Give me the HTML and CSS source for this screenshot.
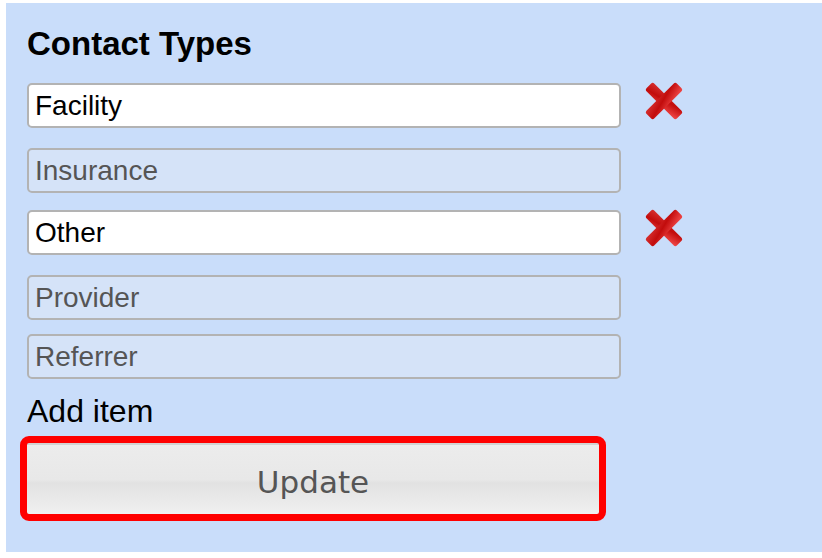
FILE: index.html
```html
<!DOCTYPE html>
<html lang="en">

<head>
    <meta charset="UTF-8" />
    <meta name="viewport" content="width=device-width, initial-scale=1.0" />
    <title>Contact Types</title>
    <link rel="stylesheet" href="styles.css">
</head>

<body>
    <div class="panel">
        <h2>Contact Types</h2>

        <!-- Lista de tipos -->
        <div class="row editable">
            <input class="item" value="Facility" />
            <button class="delete-btn" title="Delete">
                <svg width="38" height="38" viewBox="0 0 38 38">
                    <defs>
                        <linearGradient id="xg" x1="0" y1="0" x2="1" y2="1">
                            <stop offset="0" stop-color="#d63030" />
                            <stop offset="0.45" stop-color="#c20c0c" />
                            <stop offset="1" stop-color="#f24a4a" />
                        </linearGradient>
                        <g id="cross">
                            <rect x="-21.5" y="-5.5" width="43" height="11" rx="2.5" transform="translate(19 19) rotate(45)" />
                            <rect x="-21.5" y="-5.5" width="43" height="11" rx="2.5" transform="translate(19 19) rotate(-45)" />
                        </g>
                    </defs>
                    <use href="#cross" fill="url(#xg)" />
                </svg>
            </button>
        </div>
        <div class="row">
            <input class="item" value="Insurance" disabled />
        </div>
        <div class="row editable">
            <input class="item" value="Other" />
            <button class="delete-btn" title="Delete">
                <svg width="38" height="38" viewBox="0 0 38 38">
                    <use href="#cross" fill="url(#xg)" />
                </svg>
            </button>
        </div>
        <div class="row">
            <input class="item" value="Provider" disabled />
        </div>
        <div class="row">
            <input class="item" value="Referrer" disabled />
        </div>

        <div class="add">Add item</div>
        <button class="update">Update</button>
    </div>
</body>

</html>
```

FILE: styles.css
```css
:root {
    --panel: #c9ddfa;
    --locked: #d5e3f8;
    --line: #b3b3b3;
}

* {
    box-sizing: border-box;
}

body {
    margin: 0;
    background: #fff;
    font-family: "Liberation Sans", Arial, sans-serif;
    color: #000;
}

.panel {
    margin: 3px 0 6px 6px;
    height: 549px;
    background: var(--panel);
    padding: 22px 0 0 21px;
}

h2 {
    margin: 0 0 21px;
    font-size: 33px;
    font-weight: 700;
    line-height: 37px;
}

.row {
    display: flex;
    align-items: flex-start;
    gap: 24px;
    padding-top: 14px;
}

.row.editable {
    padding-top: 17px;
    padding-bottom: 6px;
}

h2 + .row.editable {
    padding-top: 0;
}

.item {
    width: 594px;
    height: 45px;
    padding: 0 6px;
    font-family: inherit;
    font-size: 28px;
    color: #000;
    background: #fff;
    border: 2px solid var(--line);
    border-radius: 5px;
}

.item:disabled {
    background: var(--locked);
    color: #555;
}

.delete-btn {
    background: transparent;
    border: none;
    padding: 0;
    margin-top: -1px;
    width: 38px;
    height: 38px;
    cursor: pointer;
}

.add {
    margin-top: 14px;
    font-size: 32px;
    line-height: 37px;
}

.update {
    display: block;
    margin-top: 13px;
    width: 572px;
    height: 71px;
    padding-top: 5px;
    font-family: "DejaVu Sans", sans-serif;
    font-size: 31px;
    color: #555;
    border: none;
    border-top: 2px solid #d2d2d2;
    border-radius: 2px;
    background: linear-gradient(#ececec, #e8e8e8 50%, #e2e2e2 55%, #f0f0f0);
    outline: 7px solid #f00;
    cursor: pointer;
}
```
